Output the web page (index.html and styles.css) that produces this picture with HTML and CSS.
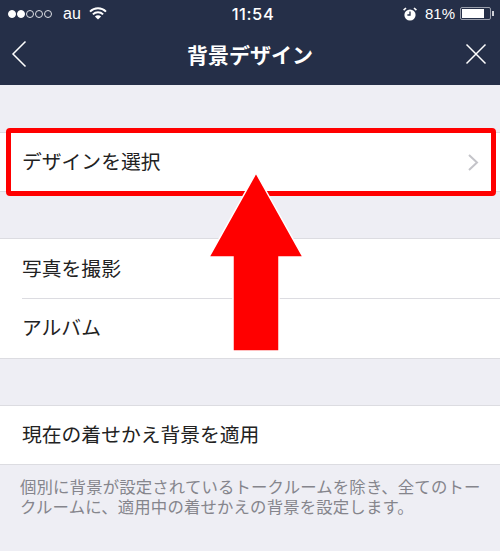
FILE: index.html
```html
<!DOCTYPE html>
<html lang="ja">
<head>
<meta charset="utf-8">
<title>背景デザイン</title>
<link rel="stylesheet" href="styles.css">
</head>
<body>
<div class="screen">
  <header class="top">
    <div class="status">
      <div class="status-left">
        <span class="signal"><i class="on"></i><i class="on"></i><i></i><i></i><i></i></span>
        <span class="carrier">au</span>
        <svg class="wifi" width="18" height="13" viewBox="0 0 18 13"><path d="M1 4.600a11.400 11.400 0 0 1 16 0" fill="none" stroke="#fff" stroke-width="2"/><path d="M3.900 7.400a7.300 7.300 0 0 1 10.200 0" fill="none" stroke="#fff" stroke-width="2"/><path d="M9 12.600 5.900 9.600a4.400 4.400 0 0 1 6.200 0z" fill="#fff"/></svg>
      </div>
      <div class="clock">11:54</div>
      <div class="status-right">
        <svg class="alarm" width="14" height="14" viewBox="0 0 14 14"><circle cx="7" cy="8" r="5.600" fill="#fff"/><path d="M7 4.600V8H4.400" fill="none" stroke="#252f48" stroke-width="1.300"/><path d="M.6 3.200 3 1M13.400 3.200 11 1" stroke="#fff" stroke-width="1.600"/></svg>
        <span class="pct">81%</span>
        <span class="battery"><span class="level"></span></span><span class="nub"></span>
      </div>
    </div>
    <div class="nav">
      <svg class="nav-back" width="16" height="28" viewBox="0 0 16 28"><path d="M14.500 1.500 2 14l12.500 12.500" fill="none" stroke="#fff" stroke-width="1.500"/></svg>
      <h1 class="title">背景デザイン</h1>
      <svg class="nav-close" width="22" height="22" viewBox="0 0 22 22"><path d="M1.500 1.500l19 19M20.500 1.500l-19 19" fill="none" stroke="#fff" stroke-width="1.500"/></svg>
    </div>
  </header>

  <section class="group first">
    <div class="row short">
      <span>デザインを選択</span>
      <svg class="chev" width="12" height="18" viewBox="0 0 12 18"><path d="M2 1.500 10 9l-8 7.500" fill="none" stroke="#c4c4c9" stroke-width="2"/></svg>
    </div>
  </section>

  <section class="group">
    <div class="row">写真を撮影</div>
    <div class="row divided">アルバム</div>
  </section>

  <section class="group">
    <div class="row short">現在の着せかえ背景を適用</div>
  </section>
  <p class="note">個別に背景が設定されているトークルームを除き、全てのトークルームに、適用中の着せかえの背景を設定します。</p>

  <div class="highlight"></div>
  <svg class="arrow" width="104" height="184" viewBox="0 0 104 184"><path d="M52 2 99 86H75V180H29V86H5Z" fill="#f00" stroke="#fff" stroke-width="1.500"/></svg>
</div>
</body>
</html>
```
FILE: styles.css
```css
* { box-sizing: border-box; }
html, body { margin: 0; padding: 0; }
body { font-family: "Liberation Sans", "Noto Sans CJK JP", sans-serif; background: #eeeef4; }
.screen { position: relative; width: 500px; height: 551px; overflow: hidden; background: #eeeef4; }

.top { height: 85px; background: #252f48; color: #fff; }
.status { height: 27px; padding: 0 6px 0 8px; display: grid; grid-template-columns: 1fr auto 1fr; align-items: center; }
.status-left { display: flex; align-items: center; }
.signal { display: flex; gap: 1px; width: 46px; }
.signal i { width: 8px; height: 8px; border-radius: 50%; border: 1px solid #dfe1e6; }
.signal i.on { background: #fff; border-color: #fff; }
.carrier { margin-left: 9px; font-size: 16px; }
.wifi { margin-left: 8px; }
.clock { font-family: Inter, "Liberation Sans", sans-serif; font-size: 16.500px; font-weight: 500; letter-spacing: .6px; transform: translateX(2px); }
.status-right { display: flex; align-items: center; justify-content: flex-end; }
.alarm { margin-right: 8px; }
.pct { font-size: 15px; margin-right: 5px; }
.battery { width: 31px; height: 13px; border: 1px solid #9a9fac; border-radius: 2px; padding: 1px; display: flex; }
.level { width: 82%; background: #fff; }
.nub { width: 2px; height: 5px; background: #cfd2d8; margin-left: 1px; }

.nav { height: 58px; padding: 0 13px 4px 11px; display: grid; grid-template-columns: 1fr auto 1fr; align-items: center; }
.nav-close { justify-self: end; }
.title { margin: 0; font-size: 21px; font-weight: 700; transform: translateX(1px); }

.group { margin-top: 46px; background: #fff; border-top: 1px solid #dcdce1; border-bottom: 1px solid #dcdce1; }
.group.first { margin-top: 47px; }
.row { height: 59px; padding: 0 21px 3px 22px; display: flex; align-items: center; justify-content: space-between; font-size: 19.800px; color: #222; }
.chev { transform: translateY(1.500px); }
.short { height: 58px; }
.divided { position: relative; height: 60px; }
.divided::before { content: ""; position: absolute; left: 22px; right: 0; top: 0; height: 1px; background: #dcdce1; }
.note { margin: 12px 18px 0 20px; font-size: 16.400px; line-height: 20px; letter-spacing: .15px; color: #85858c; }

.highlight { position: absolute; left: 6px; top: 128px; width: 490px; height: 68px; border: 5px solid #f00; border-radius: 4px; }
.arrow { position: absolute; left: 204px; top: 171px; }
```
